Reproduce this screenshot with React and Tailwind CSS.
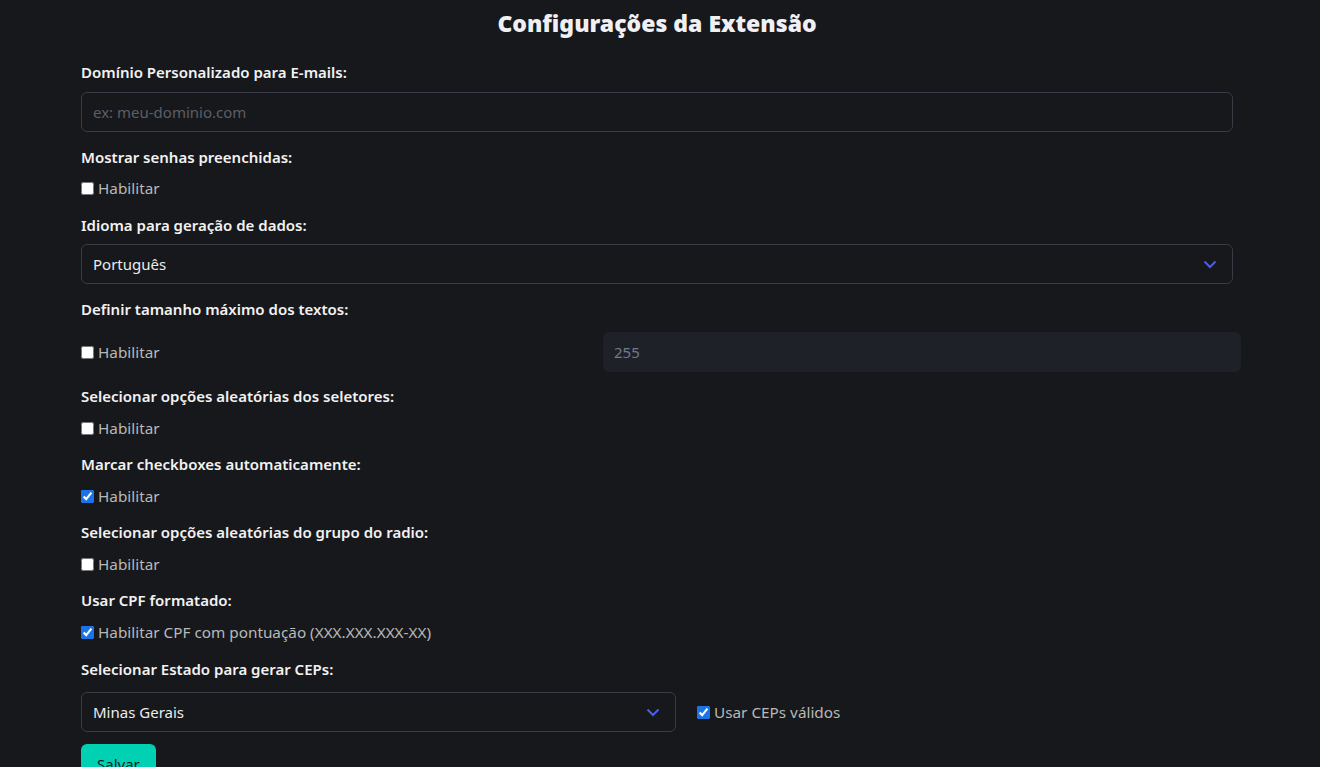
import React from "react";

const font = { fontFamily: '"Noto Sans", "Open Sans", sans-serif' };

function Label({ children, className = "" }) {
  return (
    <div className={`h-5 flex items-center text-[15px] font-semibold text-[#f2f2f2] leading-5 ${className}`}>
      {children}
    </div>
  );
}

function Check({ checked, children, className = "" }) {
  return (
    <label className={`h-5 flex items-center text-[15.3px] text-[#b8b8b8] leading-5 ${className}`}>
      <input
        type="checkbox"
        defaultChecked={checked}
        className="w-[13px] h-[13px] m-0 mr-1 accent-[#1a73e8]"
      />
      {children}
    </label>
  );
}

function Chevron() {
  return (
    <svg width="16" height="16" viewBox="0 0 16 16" fill="none" className="absolute right-[14px] top-1/2 -translate-y-1/2 pointer-events-none">
      <path d="M2.5 5.5 L8 11 L13.5 5.5" stroke="#4b5cf0" strokeWidth="2" />
    </svg>
  );
}

function Select({ value, className = "" }) {
  return (
    <div className={`relative h-10 rounded-md border border-[#3a3b46] bg-[#17181c] flex items-center px-[11px] text-[15px] text-[#ececec] ${className}`}>
      {value}
      <Chevron />
    </div>
  );
}

export default function App() {
  return (
    <div className="min-h-[767px] bg-[#17181c] overflow-hidden" style={font}>
      <h1 className="h-[46px] flex items-center justify-center pr-[6px] text-[23px] font-black text-[#f0f0f4]">
        Configurações da Extensão
      </h1>
      <div className="pl-[81px] pr-[87px] pt-[16px]">
        <Label>Domínio Personalizado para E-mails:</Label>
        <input
          placeholder="ex: meu-dominio.com"
          className="mt-[10px] w-full h-10 rounded-md border border-[#3a3b46] bg-[#17181c] px-[11px] text-[15px] text-[#ececec] placeholder:text-[#5c5e68] outline-none"
        />
        <Label className="mt-[15px]">Mostrar senhas preenchidas:</Label>
        <Check className="mt-[11px]">Habilitar</Check>
        <Label className="mt-[17px]">Idioma para geração de dados:</Label>
        <Select value="Português" className="mt-[9px]" />
        <Label className="mt-[15px]">Definir tamanho máximo dos textos:</Label>
        <div className="mt-[13px] flex items-center mr-[-8px]">
          <Check className="w-[522px]">Habilitar</Check>
          <div className="flex-1 h-10 rounded-md bg-[#1f2129] flex items-center px-[11px] text-[15px] text-[#6f7a8c]">
            255
          </div>
        </div>
        <Label className="mt-[14px]">Selecionar opções aleatórias dos seletores:</Label>
        <Check className="mt-[12px]">Habilitar</Check>
        <Label className="mt-[16px]">Marcar checkboxes automaticamente:</Label>
        <Check checked className="mt-[12px]">Habilitar</Check>
        <Label className="mt-[16px]">Selecionar opções aleatórias do grupo do radio:</Label>
        <Check className="mt-[12px]">Habilitar</Check>
        <Label className="mt-[16px]">Usar CPF formatado:</Label>
        <Check checked className="mt-[12px]">Habilitar CPF com pontuação (XXX.XXX.XXX-XX)</Check>
        <Label className="mt-[17px]">Selecionar Estado para gerar CEPs:</Label>
        <div className="mt-[13px] flex items-center">
          <Select value="Minas Gerais" className="w-[595px]" />
          <Check checked className="ml-[21px]">Usar CEPs válidos</Check>
        </div>
        <button className="mt-[12px] h-10 px-[16px] rounded-md bg-[#00d1b2] text-[15px] text-[#1a1a1a]">
          Salvar
        </button>
      </div>
    </div>
  );
}
